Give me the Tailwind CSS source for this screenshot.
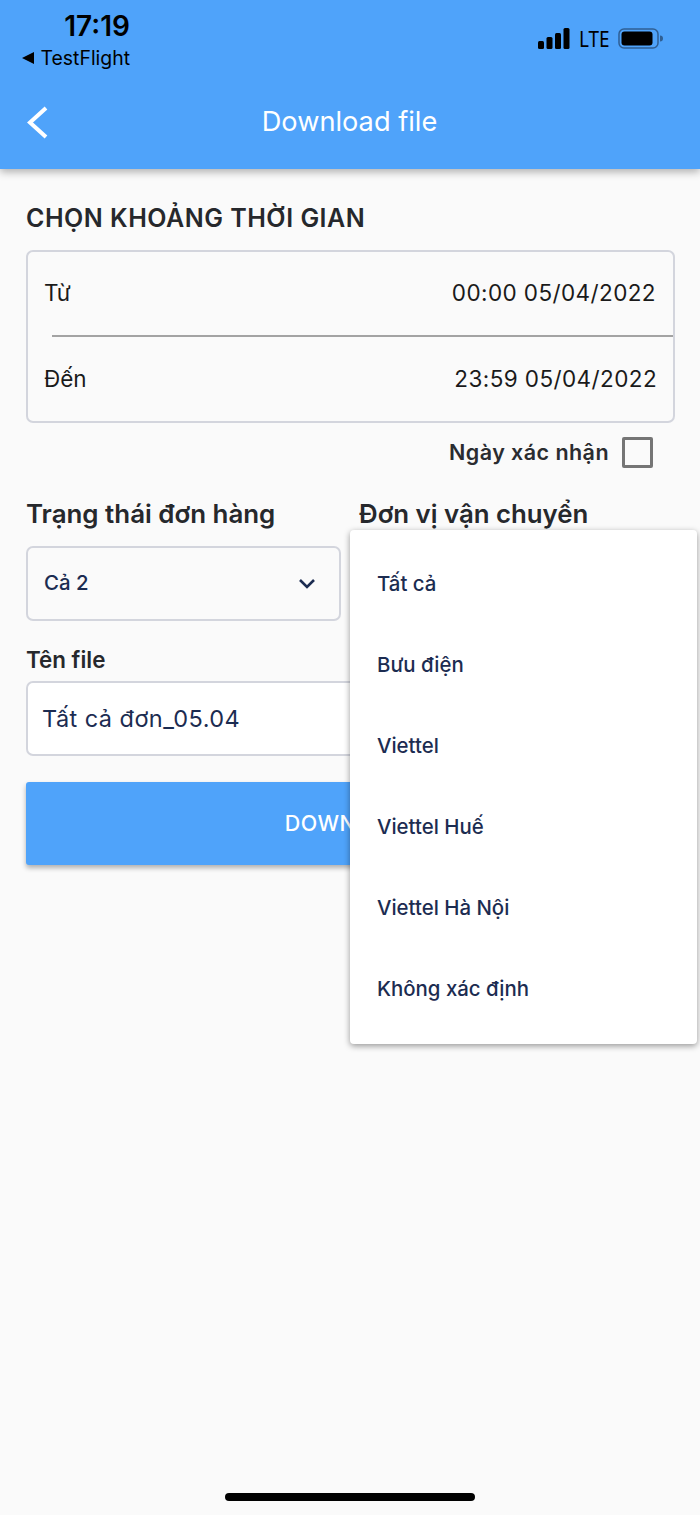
<!DOCTYPE html>
<html lang="en">
  <head>
    <meta charset="UTF-8" />
    <meta name="viewport" content="width=device-width, initial-scale=1.0" />
    <title>Download file</title>
    <script src="https://cdn.jsdelivr.net/npm/@tailwindcss/browser@4"></script>
  </head>
  <body class="bg-[#fafafa] font-[Inter,sans-serif] m-0">
    <div class="relative w-[700px] h-[1515px] overflow-hidden">
      <!-- app bar with iOS status bar -->
      <header class="relative z-10 h-[169px] bg-[#4fa3fa] shadow-[0_3px_8px_rgba(0,0,0,0.3)]">
        <div class="flex justify-between h-[80px]">
          <div class="pl-[22px] pt-[9px] w-[130px] text-black">
            <div class="text-right text-[28px] leading-[34px] font-semibold">17:19</div>
            <div class="flex items-center justify-between text-[19.4px] leading-[30px]">
              <span class="w-0 h-0 border-y-[6px] border-y-transparent border-r-[12px] border-r-black"></span>
              <span>TestFlight</span>
            </div>
          </div>
          <div class="flex items-start gap-[9px] pr-[36px] pt-[27px]">
            <svg width="32" height="22" viewBox="0 0 32 22" class="mt-[1px]">
              <rect x="0" y="13" width="6" height="8" rx="1.5" />
              <rect x="8.5" y="9" width="6" height="12" rx="1.5" />
              <rect x="17" y="5" width="6" height="16" rx="1.5" />
              <rect x="25.5" y="0" width="6" height="21" rx="1.5" />
            </svg>
            <span class="text-[21px] leading-[24px] font-normal text-black font-['Noto_Sans',sans-serif] scale-x-90 origin-left w-[31px]">LTE</span>
            <svg width="46" height="22" viewBox="0 0 46 22" class="mt-[1px] -ml-[1px]">
              <rect x="1" y="1" width="39" height="19" rx="5" fill="none" stroke="#2f5f94" stroke-width="1.5" />
              <rect x="3.5" y="3.5" width="31" height="14" rx="3" fill="#000" />
              <path d="M42 7.5 a3 3 0 0 1 0 6z" fill="#2f5f94" />
            </svg>
          </div>
        </div>
        <div class="relative flex items-center justify-center h-[84px]">
          <svg width="24" height="36" viewBox="0 0 24 36" class="absolute left-[25px] top-[24px]">
            <path d="M21 4 L5 18.5 L21 33" fill="none" stroke="#fff" stroke-width="4" />
          </svg>
          <h1 class="text-white text-[27.2px] leading-[30px] font-normal pr-[1px]">Download file</h1>
        </div>
      </header>

      <main class="pl-[26px] pr-[25px] pt-[34px]">
        <h2 class="text-[25px] leading-[30px] font-semibold text-[#26282c] tracking-[0.5px]">CHỌN KHOẢNG THỜI GIAN</h2>

        <!-- date range -->
        <div class="mt-[17px] h-[173px] border-2 border-[#d3d5dd] rounded-[7px] text-[22.5px] text-[#1a1a1a]">
          <div class="flex items-center justify-between h-[83px] pl-[16px] pr-[17px] pb-[2px]">
            <span>Từ</span>
            <span class="tracking-[0.4px]">00:00 05/04/2022</span>
          </div>
          <div class="ml-[24px] h-[2px] bg-[#a3a3a3]"></div>
          <div class="flex items-center justify-between h-[84px] pl-[16px] pr-[16px]">
            <span>Đến</span>
            <span class="tracking-[0.4px]">23:59 05/04/2022</span>
          </div>
        </div>

        <div class="flex items-center justify-end gap-[13px] pr-[22px] mt-[14px]">
          <span class="text-[21.5px] leading-[31px] font-semibold text-[#2a2c30] tracking-[0.45px]">Ngày xác nhận</span>
          <span class="w-[31px] h-[31px] border-[3px] border-[#757575] rounded-[2px]"></span>
        </div>

        <div class="grid grid-cols-[315px_1fr] gap-x-[18px] mt-[30px]">
          <div>
            <div class="text-[25.9px] leading-[32px] font-semibold text-[#26282c]">Trạng thái đơn hàng</div>
            <div class="flex items-center justify-between mt-[16px] h-[75px] border-2 border-[#d3d5dd] rounded-[7px] pl-[16px] pr-[23px]">
              <span class="text-[20.4px] font-medium text-[#1c2c51]">Cả 2</span>
              <svg width="18" height="12" viewBox="0 0 18 12">
                <path d="M2 2 L9 9 L16 2" fill="none" stroke="#1c2c51" stroke-width="2.6" />
              </svg>
            </div>
          </div>
          <div class="text-[25.8px] leading-[32px] font-semibold text-[#26282c]">Đơn vị vận chuyển</div>
        </div>

        <label class="block mt-[25px] text-[22.4px] leading-[28px] font-semibold text-[#26282c]">Tên file</label>
        <div class="flex items-center mt-[7px] h-[75px] bg-white border-2 border-[#d3d5dd] rounded-[7px] pl-[14px] text-[23.5px] tracking-[0.45px] text-[#1c2c51]">Tất cả đơn_05.04</div>

        <button class="block w-full mt-[26px] h-[83px] bg-[#4fa3fa] rounded-[3px] shadow-[0_3px_5px_rgba(0,0,0,0.3)] text-white text-[21.5px] font-medium tracking-[0.5px]">DOWNLOAD</button>
      </main>

      <!-- carrier dropdown menu -->
      <ul class="absolute left-[350px] top-[530px] w-[347px] h-[514px] pt-[14px] bg-white rounded-[4px] shadow-[0_2px_6px_rgba(0,0,0,0.4)] text-[20.4px] font-medium text-[#1c2c51]">
        <li class="flex items-center h-[81px] pl-[27px]">Tất cả</li>
        <li class="flex items-center h-[81px] pl-[27px]">Bưu điện</li>
        <li class="flex items-center h-[81px] pl-[27px]">Viettel</li>
        <li class="flex items-center h-[81px] pl-[27px]">Viettel Huế</li>
        <li class="flex items-center h-[81px] pl-[27px]">Viettel Hà Nội</li>
        <li class="flex items-center h-[81px] pl-[27px]">Không xác định</li>
      </ul>

      <div class="absolute left-[225px] bottom-[14px] w-[250px] h-[8px] rounded-full bg-black"></div>
    </div>
  </body>
</html>
